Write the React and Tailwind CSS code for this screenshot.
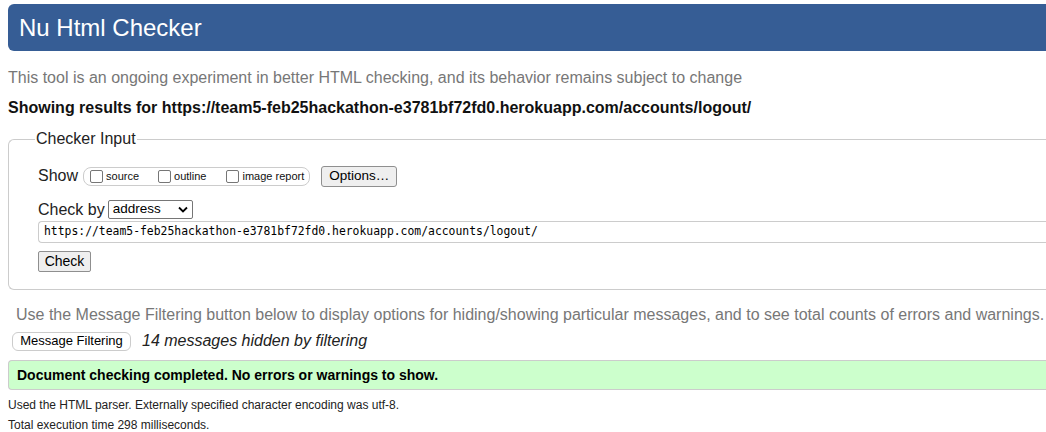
import React from "react";

const url = "https://team5-feb25hackathon-e3781bf72fd0.herokuapp.com/accounts/logout/";

function Check({ label }) {
  return (
    <label className="flex shrink-0 items-center whitespace-nowrap">
      <span className="ml-[6px] mr-[3px] inline-block h-[13px] w-[13px] shrink-0 rounded-[2px] border border-[#767676] bg-white" />
      <span className="text-[11px] text-[#111]">{label}</span>
    </label>
  );
}

export default function App() {
  return (
    <div
      className="relative h-[432px] w-[1046px] overflow-hidden bg-white text-[#222]"
      style={{ fontFamily: '"Liberation Sans", Arial, sans-serif' }}
    >
      <div className="w-[1070px] pl-2">
        <div className="mt-1 flex h-[47px] items-center rounded-l-[6px] bg-[#365d95] pl-[11px] text-[24px] text-white">
          Nu Html Checker
        </div>
        <p className="mt-[18px] text-[16px] leading-[18px] text-[#777]">
          This tool is an ongoing experiment in better HTML checking, and its behavior remains subject to change
        </p>
        <p className="mt-[12px] text-[16px] font-bold leading-[18px] text-[#111]">
          Showing results for {url}
        </p>
        <fieldset className="mt-[13px] rounded-l-[6px] border border-r-0 border-[#ccc] pb-[17px] pl-[29px]">
          <legend className="-ml-[3px] px-[1px] text-[16px] leading-[18px] text-[#222]">Checker Input</legend>
          <div className="mt-[18px] flex h-[20px] items-center">
            <span className="text-[16px] leading-[18px]">Show</span>
            <div className="ml-[5px] flex h-[19px] items-center rounded-[8px] border border-[#ccc] pr-[5px]">
              <Check label="source" />
              <span className="w-[13px] shrink-0" />
              <Check label="outline" />
              <span className="w-[14px] shrink-0" />
              <Check label="image report" />
            </div>
            <div className="ml-[11px] flex h-[21px] w-[76px] items-center justify-center rounded-[3px] border border-[#8f8f8f] bg-[#efefef] text-[13.5px] text-black">
              Options…
            </div>
          </div>
          <div className="mt-[14px] flex h-[19px] items-center">
            <span className="text-[16px] leading-[18px]">Check by</span>
            <div className="ml-[3px] flex h-[19px] w-[85px] items-center justify-between rounded-[2px] border border-[#767676] bg-white pl-[4px] pr-[4px] text-[13.5px] text-black">
              <span>address</span>
              <svg width="10" height="7" viewBox="0 0 10 7">
                <path d="M1 1.5 L5 5.5 L9 1.5" fill="none" stroke="#000" strokeWidth="1.8" />
              </svg>
            </div>
          </div>
          <div
            className="mt-[2px] flex h-[22px] items-center rounded-l-[4px] border border-r-0 border-[#ccc] pl-[5px] text-[11.4px] text-black"
            style={{ fontFamily: '"DejaVu Sans Mono", "Liberation Mono", monospace' }}
          >
            {url}
          </div>
          <div className="mt-[8px] flex h-[21px] w-[53px] items-center justify-center rounded-[2px] border border-[#8f8f8f] bg-[#efefef] text-[14px] text-black">
            Check
          </div>
        </fieldset>
        <p className="mt-[16px] pl-[8px] text-[16px] leading-[18px] text-[#777]">
          Use the Message Filtering button below to display options for hiding/showing particular messages, and to see total counts of errors and warnings.
        </p>
        <div className="mt-[5px] flex items-center">
          <div className="ml-[4px] flex h-[19px] w-[119px] items-center justify-center rounded-[6px] border border-[#ccc] bg-white text-[13px] text-black">
            Message Filtering
          </div>
          <span className="ml-[11px] text-[16px] italic text-[#222]">14 messages hidden by filtering</span>
        </div>
        <div className="mt-[7px] flex h-[30px] items-center rounded-l-[4px] border border-r-0 border-[#ccc] bg-[#ccffcc] pl-[8px] text-[14px] font-bold text-black">
          Document checking completed. No errors or warnings to show.
        </div>
        <p className="mt-[8px] text-[12px] leading-[14px] text-[#222]">
          Used the HTML parser. Externally specified character encoding was utf-8.
        </p>
        <p className="mt-[6px] text-[12px] leading-[14px] text-[#222]">Total execution time 298 milliseconds.</p>
      </div>
    </div>
  );
}
